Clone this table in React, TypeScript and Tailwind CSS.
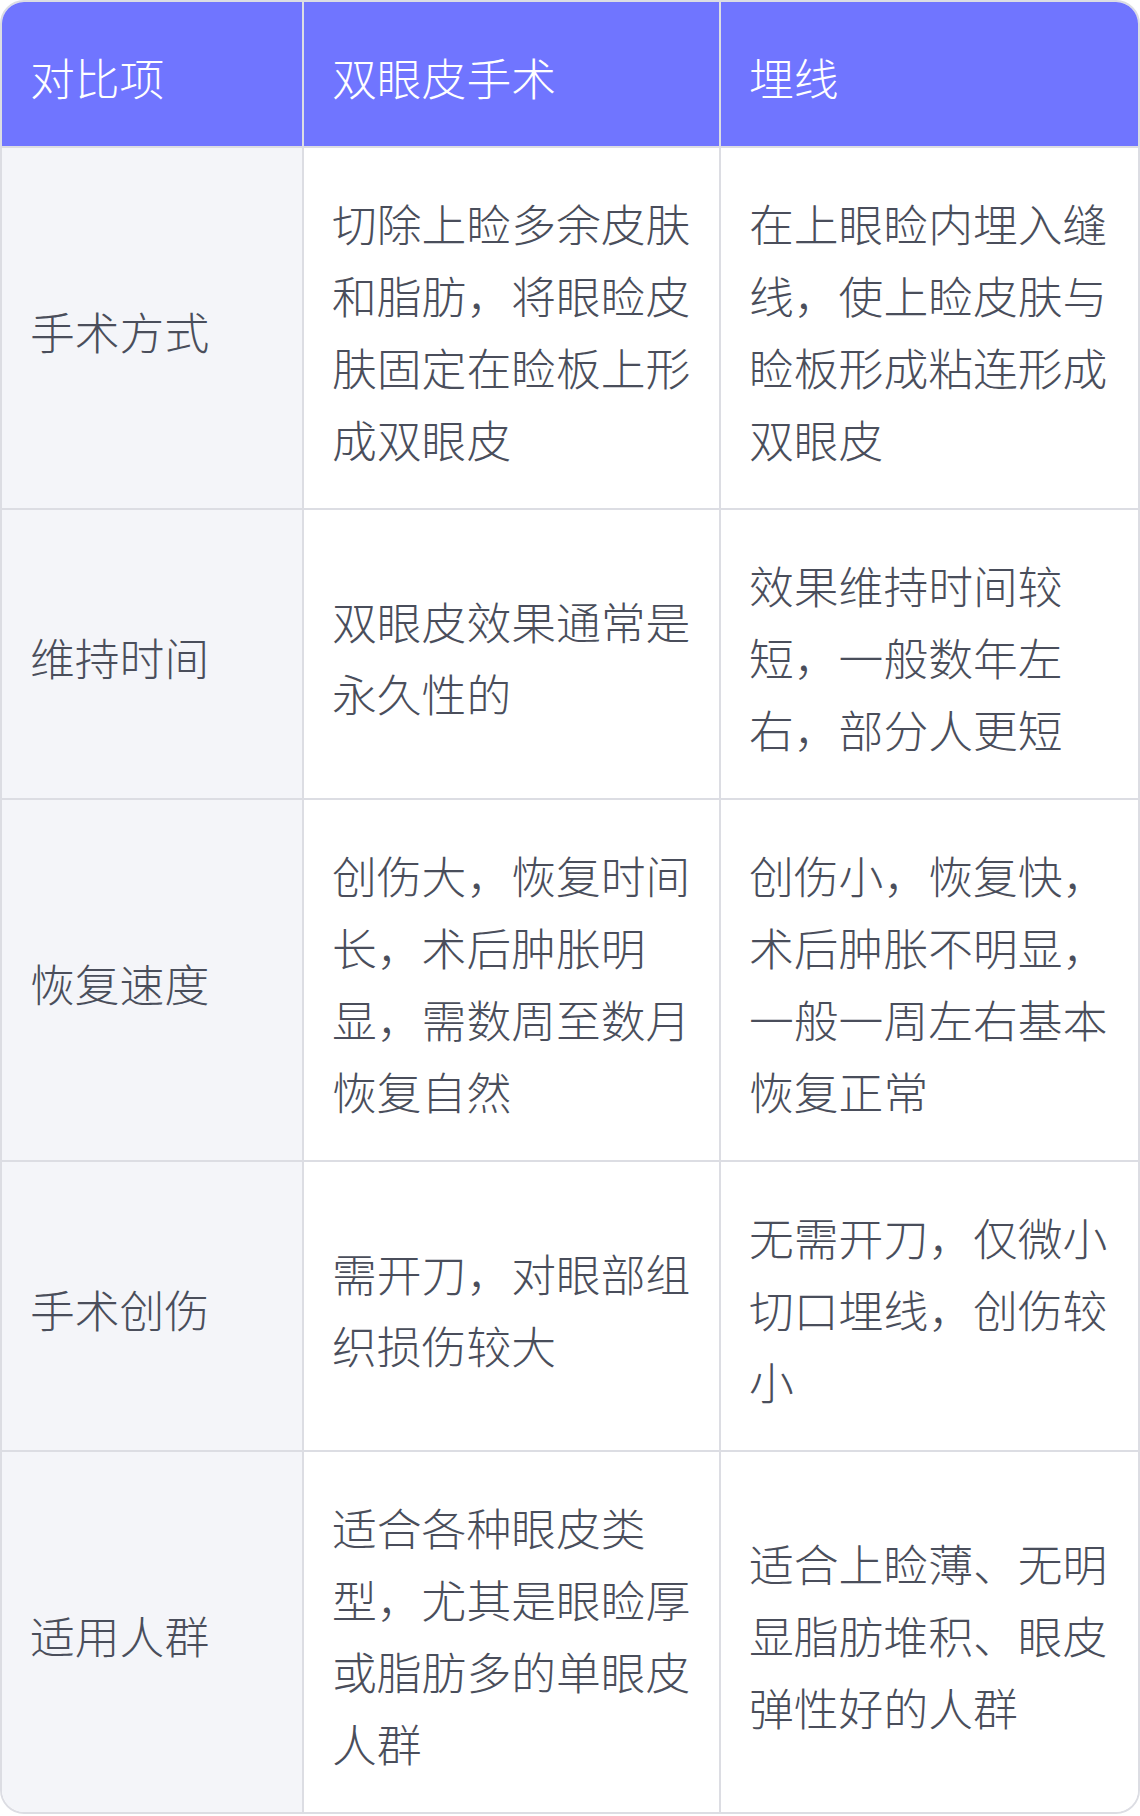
const HEAD = ["对比项", "双眼皮手术", "埋线"];

const ROWS = [
  ["手术方式", "切除上睑多余皮肤和脂肪，将眼睑皮肤固定在睑板上形成双眼皮", "在上眼睑内埋入缝线，使上睑皮肤与睑板形成粘连形成双眼皮"],
  ["维持时间", "双眼皮效果通常是永久性的", "效果维持时间较短，一般数年左右，部分人更短"],
  ["恢复速度", "创伤大，恢复时间长，术后肿胀明显，需数周至数月恢复自然", "创伤小，恢复快，术后肿胀不明显，一般一周左右基本恢复正常"],
  ["手术创伤", "需开刀，对眼部组织损伤较大", "无需开刀，仅微小切口埋线，创伤较小"],
  ["适用人群", "适合各种眼皮类型，尤其是眼睑厚或脂肪多的单眼皮人群", "适合上睑薄、无明显脂肪堆积、眼皮弹性好的人群"],
];

const cellBase = "flex items-center px-[28px] pt-[39px] pb-[33px]";
const widths = ["w-[302px] shrink-0 border-r-2 border-[#dcdde3]", "w-[417px] shrink-0 border-r-2 border-[#dcdde3]", "flex-1"];

export default function App() {
  return (
    <div className="min-h-screen bg-white font-['Noto_Sans_CJK_SC',sans-serif] text-[44.8px] leading-[72px] font-light">
      <div className="w-[1140px] overflow-hidden rounded-3xl border-2 border-[#dcdde3]">
        {/* header */}
        <div className="flex border-b-2 border-[#dcdde3] bg-[#7075ff] text-white">
          {HEAD.map((h, i) => (
            <div key={h} className={`${cellBase} ${widths[i]}`}>
              <p>{h}</p>
            </div>
          ))}
        </div>

        {ROWS.map((row, r) => (
          <div
            key={row[0]}
            className={`flex text-[#4a4e5b] ${r < ROWS.length - 1 ? "border-b-2 border-[#dcdde3]" : ""}`}
          >
            {row.map((c, i) => (
              <div key={i} className={`${cellBase} ${widths[i]} ${i === 0 ? "bg-[#f4f5f9]" : "bg-white"}`}>
                <p>{c}</p>
              </div>
            ))}
          </div>
        ))}
      </div>
    </div>
  );
}
